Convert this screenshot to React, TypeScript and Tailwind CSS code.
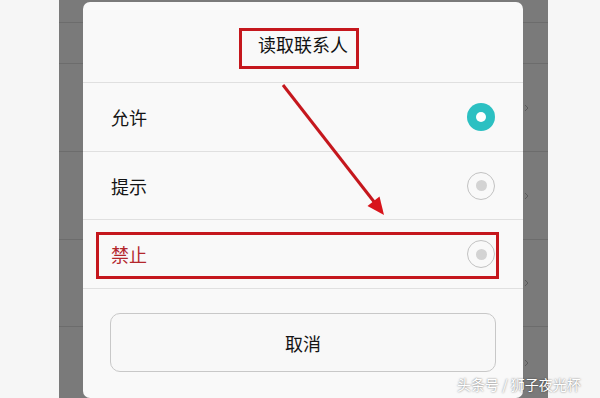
import React from 'react';

const font = { fontFamily: '"Noto Sans CJK SC", "Noto Sans", sans-serif' };

const Chevron: React.FC = () => (
  <svg width="5" height="8" viewBox="0 0 5 8" className="absolute right-[19px] top-1/2 -translate-y-1/2">
    <path d="M1 1l3 3-3 3" fill="none" stroke="#5a5a5a" strokeWidth="1" />
  </svg>
);

interface BgRowProps {
  h: string;
  chevron?: boolean;
  last?: boolean;
}

const BgRow: React.FC<BgRowProps> = ({ h, chevron, last }) => (
  <div className={`relative ${h} ${last ? '' : 'border-b border-[#6c6c6c]'}`}>{chevron && <Chevron />}</div>
);

const Radio: React.FC<{ checked?: boolean }> = ({ checked }) =>
  checked ? (
    <div className="w-7 h-7 rounded-full bg-[#2cc0c2] flex items-center justify-center">
      <div className="w-[10px] h-[10px] rounded-full bg-white" />
    </div>
  ) : (
    <div className="w-7 h-7 rounded-full border border-[#c2c2c2] flex items-center justify-center">
      <div className="w-[11px] h-[11px] rounded-full bg-[#d3d3d3]" />
    </div>
  );

interface OptionProps {
  label: string;
  h: string;
  checked?: boolean;
  danger?: boolean;
}

const Option: React.FC<OptionProps> = ({ label, h, checked, danger }) => (
  <div className={`${h} flex items-center justify-between pl-[28px] pr-[28px] border-b border-[#e0e0e0]`}>
    <span className={`text-[18px] leading-none ${danger ? 'text-[#b3272c]' : 'text-[#141414]'}`}>{label}</span>
    <Radio checked={checked} />
  </div>
);

const App: React.FC = () => {
  return (
    <div className="relative w-[600px] h-[398px] overflow-hidden flex bg-[#f6f6f6]" style={font}>
      <div className="w-[59px] shrink-0" />

      <div className="relative w-[489px] shrink-0 bg-[#7a7a7a] flex flex-col">
        <BgRow h="h-[23px]" />
        <BgRow h="h-[41px]" />
        <BgRow h="h-[88px]" chevron />
        <BgRow h="h-[88px]" chevron />
        <BgRow h="h-[87px]" chevron />
        <BgRow h="flex-1" chevron last />

        {/* dialog */}
        <div className="absolute left-[24px] top-[2px] w-[440px] h-[396px] rounded-[7px] bg-[#f9f9f9] flex flex-col">
          <div className="h-[81px] flex items-center justify-center pt-[4px] border-b border-[#e0e0e0]">
            <span className="text-[18px] leading-none text-[#111]">读取联系人</span>
          </div>
          <Option label="允许" h="h-[69px]" checked />
          <Option label="提示" h="h-[68px]" />
          <Option label="禁止" h="h-[69px]" danger />
          <div className="px-[27px] pt-[24px]">
            <div className="h-[59px] rounded-[10px] border border-[#c8c8c8] bg-[#f8f8f8] flex items-center justify-center">
              <span className="text-[18px] leading-none text-[#141414]">取消</span>
            </div>
          </div>

          {/* annotation boxes */}
          <div className="absolute left-[156px] top-[26px] w-[120px] h-[41px] border-[3px] border-[#c5171d]" />
          <div className="absolute left-[13px] top-[230px] w-[403px] h-[47px] border-[3px] border-[#c5171d]" />
        </div>
      </div>

      <div className="flex-1" />

      {/* annotation arrow */}
      <svg className="absolute left-0 top-0" width="600" height="398" viewBox="0 0 600 398">
        <line x1="283" y1="85" x2="375" y2="203" stroke="#c5171d" strokeWidth="3" />
        <polygon points="384,215 367.5,206 379.5,196.5" fill="#d8141b" />
      </svg>

      {/* watermark */}
      <div className="absolute left-[457px] top-[377px] text-[14px] leading-none text-white whitespace-nowrap [text-shadow:0_0_2px_rgba(0,0,0,0.6)]">
        头条号 / 狮子夜光杯
      </div>
    </div>
  );
};

export default App;
